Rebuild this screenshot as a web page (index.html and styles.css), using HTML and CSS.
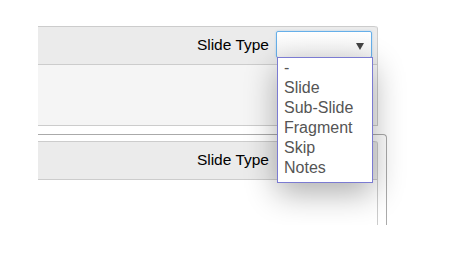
FILE: index.html
```html
<!DOCTYPE html>
<html lang="en">
<head>
    <meta charset="UTF-8">
    <title>Slide Type</title>
    <link rel="stylesheet" href="styles.css">
</head>
<body>
    <div class="frame">
        <div class="cell">
            <div class="toolbar">
                <span class="label">Slide Type</span>
                <div class="picker">
                    <div class="select"><span class="caret"></span></div>
                    <ul class="options">
                        <li>-</li>
                        <li>Slide</li>
                        <li>Sub-Slide</li>
                        <li>Fragment</li>
                        <li>Skip</li>
                        <li>Notes</li>
                    </ul>
                </div>
            </div>
            <div class="cell-body grey"></div>
        </div>

        <div class="cell-outer">
            <div class="cell">
                <div class="toolbar">
                    <span class="label">Slide Type</span>
                    <div class="picker"></div>
                </div>
                <div class="cell-body"></div>
            </div>
        </div>
    </div>
</body>
</html>
```

FILE: styles.css
```css
body
{
    margin: 0;
    background: #fff;
    font-family: "Liberation Sans", Arial, sans-serif;
}
.frame
{
    height: 225px;
    overflow: hidden;
    padding: 26px 0 0 38px;
    box-sizing: border-box;
}
.cell
{
    width: 340px;
    box-sizing: border-box;
    border-right: 1px solid #ccc;
    border-top-right-radius: 3px;
}
.toolbar
{
    display: flex;
    justify-content: flex-end;
    align-items: center;
    height: 39px;
    box-sizing: border-box;
    padding-right: 5px;
    background: #ebebeb;
    border-top: 1px solid #ccc;
    border-bottom: 1px solid #ccc;
    border-top-right-radius: 3px;
}
.label
{
    font-size: 15.5px;
    color: #000;
    margin-right: 7px;
    margin-top: -2px;
}
.picker
{
    position: relative;
    width: 96px;
    height: 27px;
    margin-top: -2px;
}
.select
{
    height: 100%;
    box-sizing: border-box;
    border: 1px solid #66afe9;
    border-radius: 2px;
    background: linear-gradient(#fff, #f2f2f2);
    box-shadow: 0 0 2px rgba(102, 175, 233, 0.5);
}
.caret
{
    position: absolute;
    right: 8px;
    top: 12px;
    border-left: 4px solid transparent;
    border-right: 4px solid transparent;
    border-top: 7px solid #444;
}
.options
{
    position: absolute;
    top: 26px;
    left: 1px;
    width: 96px;
    box-sizing: border-box;
    margin: 0;
    padding: 0 0 4px 0;
    list-style: none;
    background: #fff;
    border: 1px solid #7b7bd2;
    box-shadow: 0 10px 30px rgba(0, 0, 0, 0.32);
    z-index: 2;
}
.options li
{
    font-size: 16px;
    line-height: 20px;
    padding-left: 6px;
    color: #555;
}
.cell-body
{
    height: 60px;
    border-bottom: 1px solid #ccc;
}
.cell-body.grey
{
    background: #f5f5f5;
}
.cell-outer
{
    width: 349px;
    box-sizing: border-box;
    margin-top: 8px;
    padding: 6px 8px 0 0;
    border-top: 1px solid #aaa;
    border-right: 1px solid #aaa;
    border-top-right-radius: 4px;
}
.cell-outer .cell-body
{
    height: 60px;
    border-bottom: none;
}
```
